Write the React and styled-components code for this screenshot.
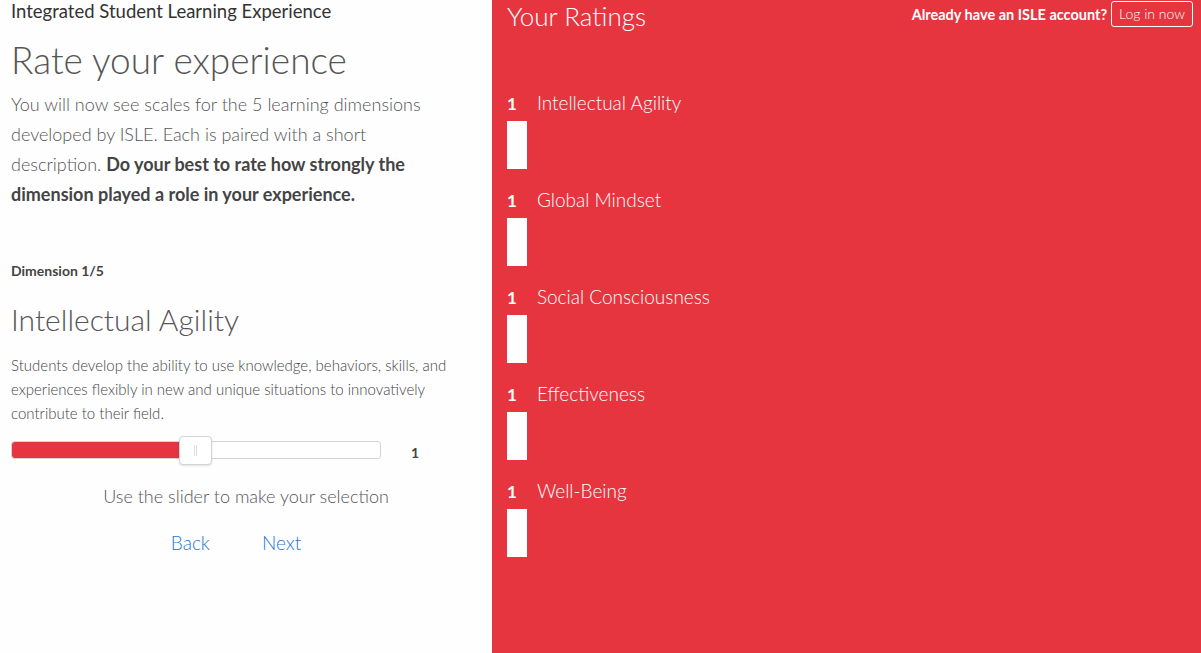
import React from 'react';
import styled, { createGlobalStyle } from 'styled-components';

const GlobalStyle = createGlobalStyle`
  html, body {
    margin: 0;
    padding: 0;
    font-family: 'Lato', 'Liberation Sans', sans-serif;
    color: #333;
  }
`;

const dimensions = [
  'Intellectual Agility',
  'Global Mindset',
  'Social Consciousness',
  'Effectiveness',
  'Well-Being',
];

const App = () => {
  return (
    <Page>
      <GlobalStyle />
      <Survey>
        <Brand>Integrated Student Learning Experience</Brand>
        <Title>Rate your experience</Title>
        <Intro>
          You will now see scales for the 5 learning dimensions developed by ISLE. Each is
          paired with a short description. <b>Do your best to rate how strongly the dimension
          played a role in your experience.</b>
        </Intro>
        <Step>Dimension 1/5</Step>
        <DimTitle>Intellectual Agility</DimTitle>
        <DimText>
          Students develop the ability to use knowledge, behaviors, skills, and experiences
          flexibly in new and unique situations to innovatively contribute to their field.
        </DimText>
        <SliderRow>
          <Track>
            <Fill style={{ width: '46%' }} />
            <Thumb style={{ left: '45.5%' }}>
              <span />
            </Thumb>
          </Track>
          <Value>1</Value>
        </SliderRow>
        <Hint>Use the slider to make your selection</Hint>
        <Nav>
          <LinkButton>Back</LinkButton>
          <LinkButton>Next</LinkButton>
        </Nav>
      </Survey>

      <Ratings>
        <TopBar>
          <h2>Your Ratings</h2>
          <Account>
            <span>Already have an ISLE account?</span>
            <LoginButton>Log in now</LoginButton>
          </Account>
        </TopBar>
        <RatingList>
          {dimensions.map((d) => (
            <RatingItem key={d}>
              <RatingHead>
                <strong>1</strong>
                <span>{d}</span>
              </RatingHead>
              <Bar $level={1} />
            </RatingItem>
          ))}
        </RatingList>
      </Ratings>
    </Page>
  );
};

const Page = styled.div`
  display: flex;
  width: 1201px;
  height: 653px;
  overflow: hidden;
`;

const Survey = styled.div`
  width: 492px;
  flex-shrink: 0;
  box-sizing: border-box;
  padding: 0 11px;
  background: #fefefe;
`;

const Brand = styled.div`
  font-size: 18.5px;
  line-height: 22px;
  color: #333;
`;

const Title = styled.h1`
  margin: 16px 0 0;
  font-size: 37px;
  font-weight: 300;
  line-height: 44px;
  color: #555;
`;

const Intro = styled.p`
  margin: 7px 0 0;
  font-size: 18px;
  font-weight: 300;
  line-height: 30px;
  color: #555;
  padding-right: 50px;

  b {
    font-weight: 700;
    color: #444;
  }
`;

const Step = styled.div`
  margin-top: 52px;
  font-size: 14px;
  font-weight: 700;
  color: #444;
  line-height: 20px;
`;

const DimTitle = styled.h2`
  margin: 20px 0 0;
  font-size: 30px;
  font-weight: 300;
  line-height: 36px;
  color: #555;
`;

const DimText = styled.p`
  margin: 16px 0 0;
  font-size: 15px;
  font-weight: 300;
  line-height: 24px;
  color: #444;
  padding-right: 10px;
`;

const SliderRow = styled.div`
  display: flex;
  align-items: center;
  margin-top: 10px;
  height: 30px;
`;

const Track = styled.div`
  position: relative;
  width: 370px;
  height: 18px;
  box-sizing: border-box;
  border: 1px solid #d4d4d4;
  border-radius: 3px;
  background: #fff;
`;

const Fill = styled.div`
  height: 100%;
  background: #e6353f;
  border-radius: 3px 0 0 3px;
`;

const Thumb = styled.div`
  position: absolute;
  top: -6px;
  width: 33px;
  height: 29px;
  box-sizing: border-box;
  background: #fff;
  border: 1px solid #d4d4d4;
  border-radius: 4px;
  box-shadow: 0 1px 2px rgba(0, 0, 0, 0.12);
  display: flex;
  align-items: center;
  justify-content: center;

  span {
    width: 1px;
    height: 11px;
    border-left: 1px solid #ddd;
    border-right: 1px solid #ddd;
  }
`;

const Value = styled.div`
  margin-left: 30px;
  font-size: 14px;
  font-weight: 700;
  color: #444;
  padding-top: 4px;
`;

const Hint = styled.div`
  margin-top: 20px;
  text-align: center;
  font-size: 18px;
  font-weight: 300;
  color: #555;
`;

const Nav = styled.div`
  display: flex;
  justify-content: center;
  gap: 52px;
  margin-top: 24px;
  padding-right: 20px;
`;

const LinkButton = styled.a`
  font-size: 19px;
  font-weight: 300;
  color: #1f78d1;
  cursor: pointer;
`;

const Ratings = styled.div`
  flex: 1;
  background: #e6353f;
  color: #fff;
  padding: 0 8px 0 15px;
`;

const TopBar = styled.div`
  display: flex;
  justify-content: space-between;
  align-items: flex-start;

  h2 {
    margin: 0;
    font-size: 26px;
    font-weight: 300;
    line-height: 32px;
  }
`;

const Account = styled.div`
  display: flex;
  align-items: center;
  gap: 4px;
  padding-top: 1px;
  font-size: 14.5px;
  font-weight: 700;
`;

const LoginButton = styled.button`
  font-family: inherit;
  font-size: 14px;
  font-weight: 300;
  color: #fff;
  background: transparent;
  border: 1px solid #fff;
  border-radius: 3px;
  padding: 3px 7px;
  line-height: 18px;
`;

const RatingList = styled.div`
  display: flex;
  flex-direction: column;
  gap: 19px;
  margin-top: 59px;
`;

const RatingItem = styled.div`
  display: flex;
  flex-direction: column;
  gap: 5px;
`;

const RatingHead = styled.div`
  display: flex;
  align-items: baseline;
  gap: 20px;
  font-size: 19px;
  line-height: 24px;

  strong {
    font-size: 17px;
    font-weight: 700;
  }
  span {
    font-weight: 300;
  }
`;

const Bar = styled.div`
  width: 20px;
  height: ${(p) => p.$level * 48}px;
  background: #fff;
`;

export default App;
